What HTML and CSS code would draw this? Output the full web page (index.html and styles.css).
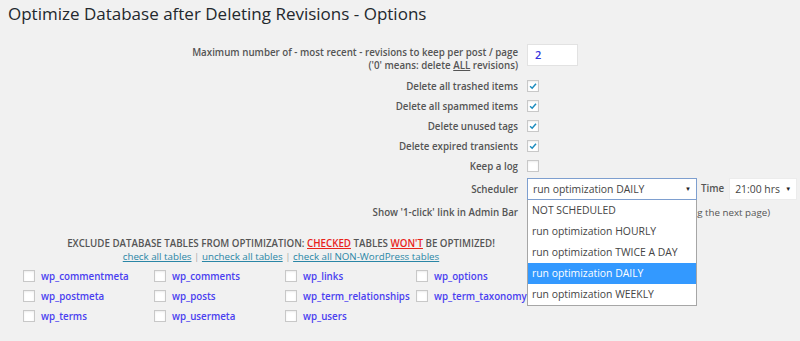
FILE: index.html
```html
<!DOCTYPE html>
<html lang="en">

<head>
    <meta charset="UTF-8">
    <meta name="viewport" content="width=device-width, initial-scale=1.0">
    <title>Options</title>
    <link rel="stylesheet" href="styles.css">
</head>

<body>
    <h1 class="title">Optimize Database after Deleting Revisions - Options</h1>

    <div class="opts">
        <div class="lbl lbl-top">Maximum number of - most recent - revisions to keep per post / page<br>('0' means: delete <u>ALL</u> revisions)</div>
        <div class="ctl ctl-top"><span class="num">2</span></div>

        <div class="lbl">Delete all trashed items</div>
        <div class="ctl"><span class="cb on"><svg viewBox="0 0 12 12"><path d="M2.5 6.2 L5 8.6 L9.6 3.2"/></svg></span></div>

        <div class="lbl">Delete all spammed items</div>
        <div class="ctl"><span class="cb on"><svg viewBox="0 0 12 12"><path d="M2.5 6.2 L5 8.6 L9.6 3.2"/></svg></span></div>

        <div class="lbl">Delete unused tags</div>
        <div class="ctl"><span class="cb on"><svg viewBox="0 0 12 12"><path d="M2.5 6.2 L5 8.6 L9.6 3.2"/></svg></span></div>

        <div class="lbl">Delete expired transients</div>
        <div class="ctl"><span class="cb on"><svg viewBox="0 0 12 12"><path d="M2.5 6.2 L5 8.6 L9.6 3.2"/></svg></span></div>

        <div class="lbl">Keep a log</div>
        <div class="ctl"><span class="cb"></span></div>

        <div class="lbl">Scheduler</div>
        <div class="ctl sched">
            <div class="sel sel-open">run optimization DAILY<span class="arrow">&#9660;</span></div>
            <span class="time-lbl">Time</span>
            <div class="sel sel-time">21:00 hrs<span class="arrow">&#9660;</span></div>
            <ul class="drop">
                <li>NOT SCHEDULED</li>
                <li>run optimization HOURLY</li>
                <li>run optimization TWICE A DAY</li>
                <li class="active">run optimization DAILY</li>
                <li>run optimization WEEKLY</li>
            </ul>
        </div>

        <div class="lbl">Show '1-click' link in Admin Bar</div>
        <div class="ctl">
            <div class="sel sel-small"></div>
            <span class="note">(after loading the next page)</span>
        </div>
    </div>

    <div class="exclude">
        <div class="ex-head">Exclude database tables from optimization: <span class="red">checked</span> tables <span class="red">won't</span> be optimized!</div>
        <div class="ex-links"><a href="#">check all tables</a> | <a href="#">uncheck all tables</a> | <a href="#">check all NON-WordPress tables</a></div>
    </div>

    <div class="tables">
        <label class="tbl"><span class="cb"></span>wp_commentmeta</label>
        <label class="tbl"><span class="cb"></span>wp_comments</label>
        <label class="tbl"><span class="cb"></span>wp_links</label>
        <label class="tbl"><span class="cb"></span>wp_options</label>
        <label class="tbl"><span class="cb"></span>wp_postmeta</label>
        <label class="tbl"><span class="cb"></span>wp_posts</label>
        <label class="tbl"><span class="cb"></span>wp_term_relationships</label>
        <label class="tbl"><span class="cb"></span>wp_term_taxonomy</label>
        <label class="tbl"><span class="cb"></span>wp_terms</label>
        <label class="tbl"><span class="cb"></span>wp_usermeta</label>
        <label class="tbl"><span class="cb"></span>wp_users</label>
    </div>
</body>

</html>
```

FILE: styles.css
```css
body {
    margin: 0;
    padding: 0 8px;
    background: #f1f1f1;
    font-family: "Open Sans", "Liberation Sans", sans-serif;
    color: #555;
    overflow: hidden;
}

.title {
    margin: 0;
    padding: 2px 0 0;
    font-size: 17px;
    font-weight: 400;
    line-height: 23px;
    color: #23282d;
}

.opts {
    display: grid;
    grid-template-columns: 510px 1fr;
    grid-template-rows: 32px repeat(5, 20px) 26px 20px;
    column-gap: 9px;
    align-items: center;
    margin-top: 19px;
}

.lbl {
    text-align: right;
    font-size: 9.75px;
    font-weight: 600;
    line-height: 13px;
}

.lbl-top,
.ctl-top {
    align-self: start;
}

.lbl-top {
    padding-top: 2px;
}

.ctl {
    display: flex;
    align-items: center;
}

.num {
    display: block;
    width: 51px;
    height: 22px;
    padding-left: 7px;
    background: #fff;
    border: 1px solid #e2e2e2;
    box-sizing: border-box;
    font-size: 11px;
    line-height: 20px;
    font-weight: 600;
    color: #3333dd;
}

.cb {
    display: inline-block;
    width: 12px;
    height: 12px;
    background: #fff;
    border: 1px solid #c8c8c8;
    box-sizing: border-box;
    box-shadow: inset 0 1px 2px rgba(0, 0, 0, .08);
    flex: none;
}

.cb svg {
    display: block;
    width: 10px;
    height: 10px;
    fill: none;
    stroke: #1e8cbe;
    stroke-width: 1.8;
}

.sched {
    position: relative;
}

.sel {
    position: relative;
    height: 22px;
    box-sizing: border-box;
    padding-left: 5px;
    background: #fff;
    font-size: 10.4px;
    line-height: 20px;
    color: #444;
}

.arrow {
    position: absolute;
    right: 5px;
    top: 0;
    font-size: 6px;
    color: #222;
}

.sel-open {
    width: 170px;
    border: 1px solid #7e9fcf;
}

.time-lbl {
    margin: 0 5px 0 4px;
    font-size: 9.75px;
    font-weight: 600;
    position: relative;
    top: -1px;
}

.sel-time {
    width: 68px;
    border: 1px solid #ececec;
}

.sel-small {
    width: 110px;
    border: 1px solid #ddd;
}

.note {
    margin-left: 5px;
    font-size: 9.75px;
    color: #555;
}

.drop {
    position: absolute;
    left: 0;
    top: 22px;
    z-index: 2;
    width: 170px;
    margin: 0;
    padding: 0;
    list-style: none;
    background: #fff;
    border: 1px solid #a6a6a6;
    border-top: none;
    box-sizing: border-box;
}

.drop li {
    height: 21px;
    padding-left: 4px;
    font-size: 10.4px;
    line-height: 21px;
    color: #444;
}

.drop li.active {
    background: #3399ff;
    color: #fff;
}

.exclude {
    width: 546px;
    margin-top: 15px;
    text-align: center;
    font-size: 9.75px;
    line-height: 13px;
}

.ex-head {
    font-weight: 600;
    text-transform: uppercase;
}

.red {
    color: #e8231b;
    text-decoration: underline;
}

.ex-links {
    color: #aaa;
}

.ex-links a {
    color: #2a86a6;
}

.tables {
    display: grid;
    grid-template-columns: repeat(4, 131px);
    grid-auto-rows: 20px;
    align-items: center;
    padding-left: 15px;
    margin-top: 3px;
}

.tbl {
    display: flex;
    align-items: center;
    gap: 6px;
    font-size: 9.75px;
    font-weight: 600;
    color: #4a3ff0;
    white-space: nowrap;
}
```
